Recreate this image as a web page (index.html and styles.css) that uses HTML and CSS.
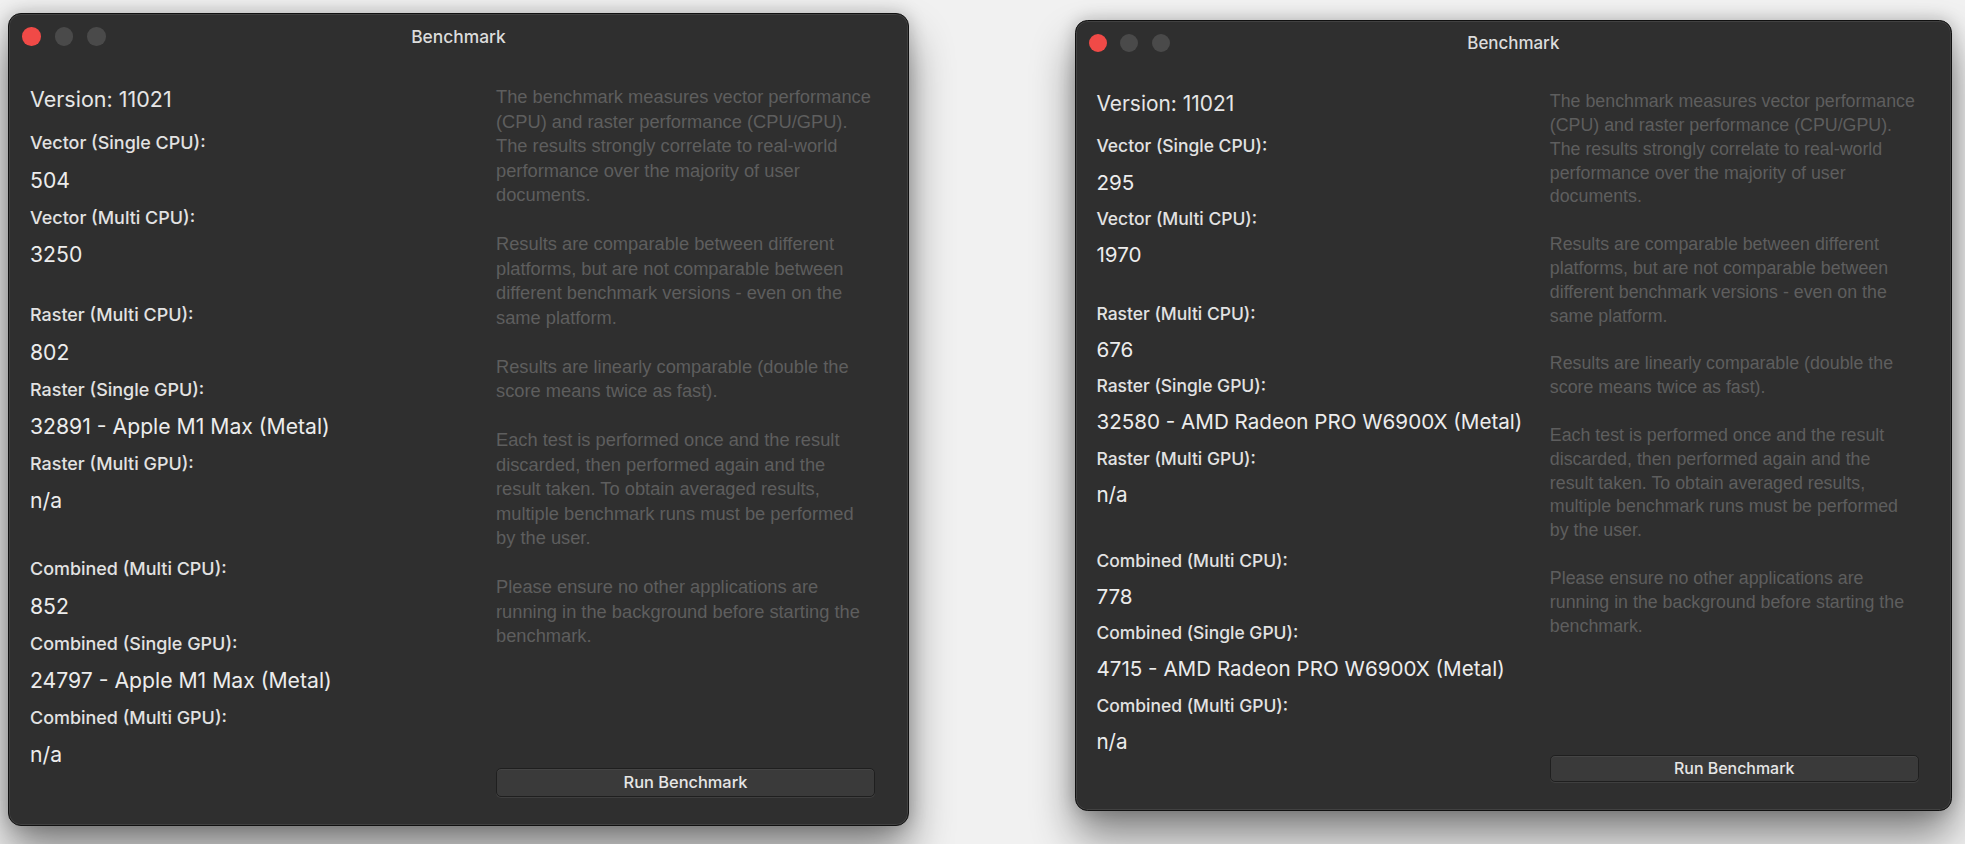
FILE: index.html
```html
<!DOCTYPE html>
<html lang="en">
<head>
<meta charset="utf-8">
<title>Benchmark</title>
<link rel="stylesheet" href="styles.css">
</head>
<body>
<div class="desktop">
  <section class="window w1">
    <header class="titlebar">
      <div class="lights"><span class="light close"></span><span class="light"></span><span class="light"></span></div>
      <div class="title">Benchmark</div>
      <div class="spacer"></div>
    </header>
    <div class="body">
      <div class="results">
        <div class="row version">Version: 11021</div>
        <div class="group">
          <div class="row label">Vector (Single CPU):</div>
          <div class="row value">504</div>
          <div class="row label">Vector (Multi CPU):</div>
          <div class="row value">3250</div>
        </div>
        <div class="group g2">
          <div class="row label">Raster (Multi CPU):</div>
          <div class="row value">802</div>
          <div class="row label">Raster (Single GPU):</div>
          <div class="row value">32891 - Apple M1 Max (Metal)</div>
          <div class="row label">Raster (Multi GPU):</div>
          <div class="row value">n/a</div>
        </div>
        <div class="group g3">
          <div class="row label">Combined (Multi CPU):</div>
          <div class="row value">852</div>
          <div class="row label">Combined (Single GPU):</div>
          <div class="row value">24797 - Apple M1 Max (Metal)</div>
          <div class="row label">Combined (Multi GPU):</div>
          <div class="row value">n/a</div>
        </div>
      </div>
      <div class="info">
        <div class="desc">
          <p>The benchmark measures vector performance<br>(CPU) and raster performance (CPU/GPU).<br>The results strongly correlate to real-world<br>performance over the majority of user<br>documents.</p>
          <p>Results are comparable between different<br>platforms, but are not comparable between<br>different benchmark versions - even on the<br>same platform.</p>
          <p>Results are linearly comparable (double the<br>score means twice as fast).</p>
          <p>Each test is performed once and the result<br>discarded, then performed again and the<br>result taken. To obtain averaged results,<br>multiple benchmark runs must be performed<br>by the user.</p>
          <p>Please ensure no other applications are<br>running in the background before starting the<br>benchmark.</p>
        </div>
        <button class="run" type="button">Run Benchmark</button>
      </div>
    </div>
  </section>

  <section class="window w2">
    <header class="titlebar">
      <div class="lights"><span class="light close"></span><span class="light"></span><span class="light"></span></div>
      <div class="title">Benchmark</div>
      <div class="spacer"></div>
    </header>
    <div class="body">
      <div class="results">
        <div class="row version">Version: 11021</div>
        <div class="group">
          <div class="row label">Vector (Single CPU):</div>
          <div class="row value">295</div>
          <div class="row label">Vector (Multi CPU):</div>
          <div class="row value">1970</div>
        </div>
        <div class="group g2">
          <div class="row label">Raster (Multi CPU):</div>
          <div class="row value">676</div>
          <div class="row label">Raster (Single GPU):</div>
          <div class="row value">32580 - AMD Radeon PRO W6900X (Metal)</div>
          <div class="row label">Raster (Multi GPU):</div>
          <div class="row value">n/a</div>
        </div>
        <div class="group g3">
          <div class="row label">Combined (Multi CPU):</div>
          <div class="row value">778</div>
          <div class="row label">Combined (Single GPU):</div>
          <div class="row value">4715 - AMD Radeon PRO W6900X (Metal)</div>
          <div class="row label">Combined (Multi GPU):</div>
          <div class="row value">n/a</div>
        </div>
      </div>
      <div class="info">
        <div class="desc">
          <p>The benchmark measures vector performance<br>(CPU) and raster performance (CPU/GPU).<br>The results strongly correlate to real-world<br>performance over the majority of user<br>documents.</p>
          <p>Results are comparable between different<br>platforms, but are not comparable between<br>different benchmark versions - even on the<br>same platform.</p>
          <p>Results are linearly comparable (double the<br>score means twice as fast).</p>
          <p>Each test is performed once and the result<br>discarded, then performed again and the<br>result taken. To obtain averaged results,<br>multiple benchmark runs must be performed<br>by the user.</p>
          <p>Please ensure no other applications are<br>running in the background before starting the<br>benchmark.</p>
        </div>
        <button class="run" type="button">Run Benchmark</button>
      </div>
    </div>
  </section>
</div>
</body>
</html>
```

FILE: styles.css
```css
html, body {
  margin: 0;
  padding: 0;
}

body {
  width: 1965px;
  height: 844px;
  overflow: hidden;
  background: #f1f1f1;
  font-family: Inter, "Noto Sans", sans-serif;
}

.desktop {
  display: flex;
  align-items: flex-start;
  height: 844px;
}

.window {
  --u: 1px;
  box-sizing: border-box;
  width: calc(901 * var(--u));
  height: calc(813 * var(--u));
  background: #2f2f2f;
  border: 1px solid #111;
  border-radius: calc(13 * var(--u));
  box-shadow:
    inset 0 0 0 1px rgba(255, 255, 255, 0.09),
    0 calc(26 * var(--u)) calc(44 * var(--u)) rgba(0, 0, 0, 0.45),
    0 0 calc(18 * var(--u)) rgba(0, 0, 0, 0.22);
  display: flex;
  flex-direction: column;
  color: #e6e6e6;
}

.w1 {
  margin-left: 8px;
  margin-top: 13px;
}

.w2 {
  --u: 0.973px;
  margin-left: 166px;
  margin-top: 20px;
}

.titlebar {
  height: calc(45 * var(--u));
  flex: none;
  display: grid;
  grid-template-columns: 1fr auto 1fr;
  align-items: center;
}

.lights {
  display: flex;
  gap: calc(14 * var(--u));
  padding-left: calc(13 * var(--u));
}

.light {
  width: calc(18.5 * var(--u));
  height: calc(18.5 * var(--u));
  border-radius: 50%;
  background: #4a4a4a;
}

.light.close {
  background: #f04a47;
}

.title {
  font-size: calc(17.4 * var(--u));
  font-weight: 500;
  color: #dcdcdc;
}

.body {
  flex: 1;
  display: grid;
  grid-template-columns: calc(466 * var(--u)) calc(379 * var(--u));
  padding: 0 calc(34 * var(--u)) calc(28.5 * var(--u)) calc(21 * var(--u));
  min-height: 0;
}

.results {
  padding-top: calc(21.5 * var(--u));
}

.row {
  height: calc(37.2 * var(--u));
  line-height: calc(37.2 * var(--u));
  white-space: nowrap;
}

.version {
  font-size: calc(21.5 * var(--u));
  margin-bottom: calc(6.8 * var(--u));
}

.label {
  font-size: calc(17.95 * var(--u));
  font-weight: 500;
  color: #e2e2e2;
}

.value {
  font-size: calc(21.2 * var(--u));
  color: #ececec;
}

.g2 {
  margin-top: calc(23.2 * var(--u));
}

.g3 {
  margin-top: calc(30.8 * var(--u));
}

.info {
  display: flex;
  flex-direction: column;
  padding-top: calc(26 * var(--u));
}

.desc {
  font-family: "Liberation Sans", Arial, sans-serif;
  font-size: calc(18.3 * var(--u));
  line-height: calc(24.5 * var(--u));
  color: #5e5e5e;
  white-space: nowrap;
}

.desc p {
  margin: 0 0 calc(24.5 * var(--u));
}

.run {
  margin-top: auto;
  height: calc(28.5 * var(--u));
  box-sizing: border-box;
  width: 100%;
  border: 1px solid #1f1f1f;
  border-radius: calc(5 * var(--u));
  background: #3a3a3a;
  box-shadow: inset 0 1px 0 rgba(255, 255, 255, 0.06), 0 1px 0 rgba(255, 255, 255, 0.08);
  color: #e6e6e6;
  font-family: Inter, "Noto Sans", sans-serif;
  font-size: calc(16.4 * var(--u));
  font-weight: 500;
  padding: 0;
}
```
